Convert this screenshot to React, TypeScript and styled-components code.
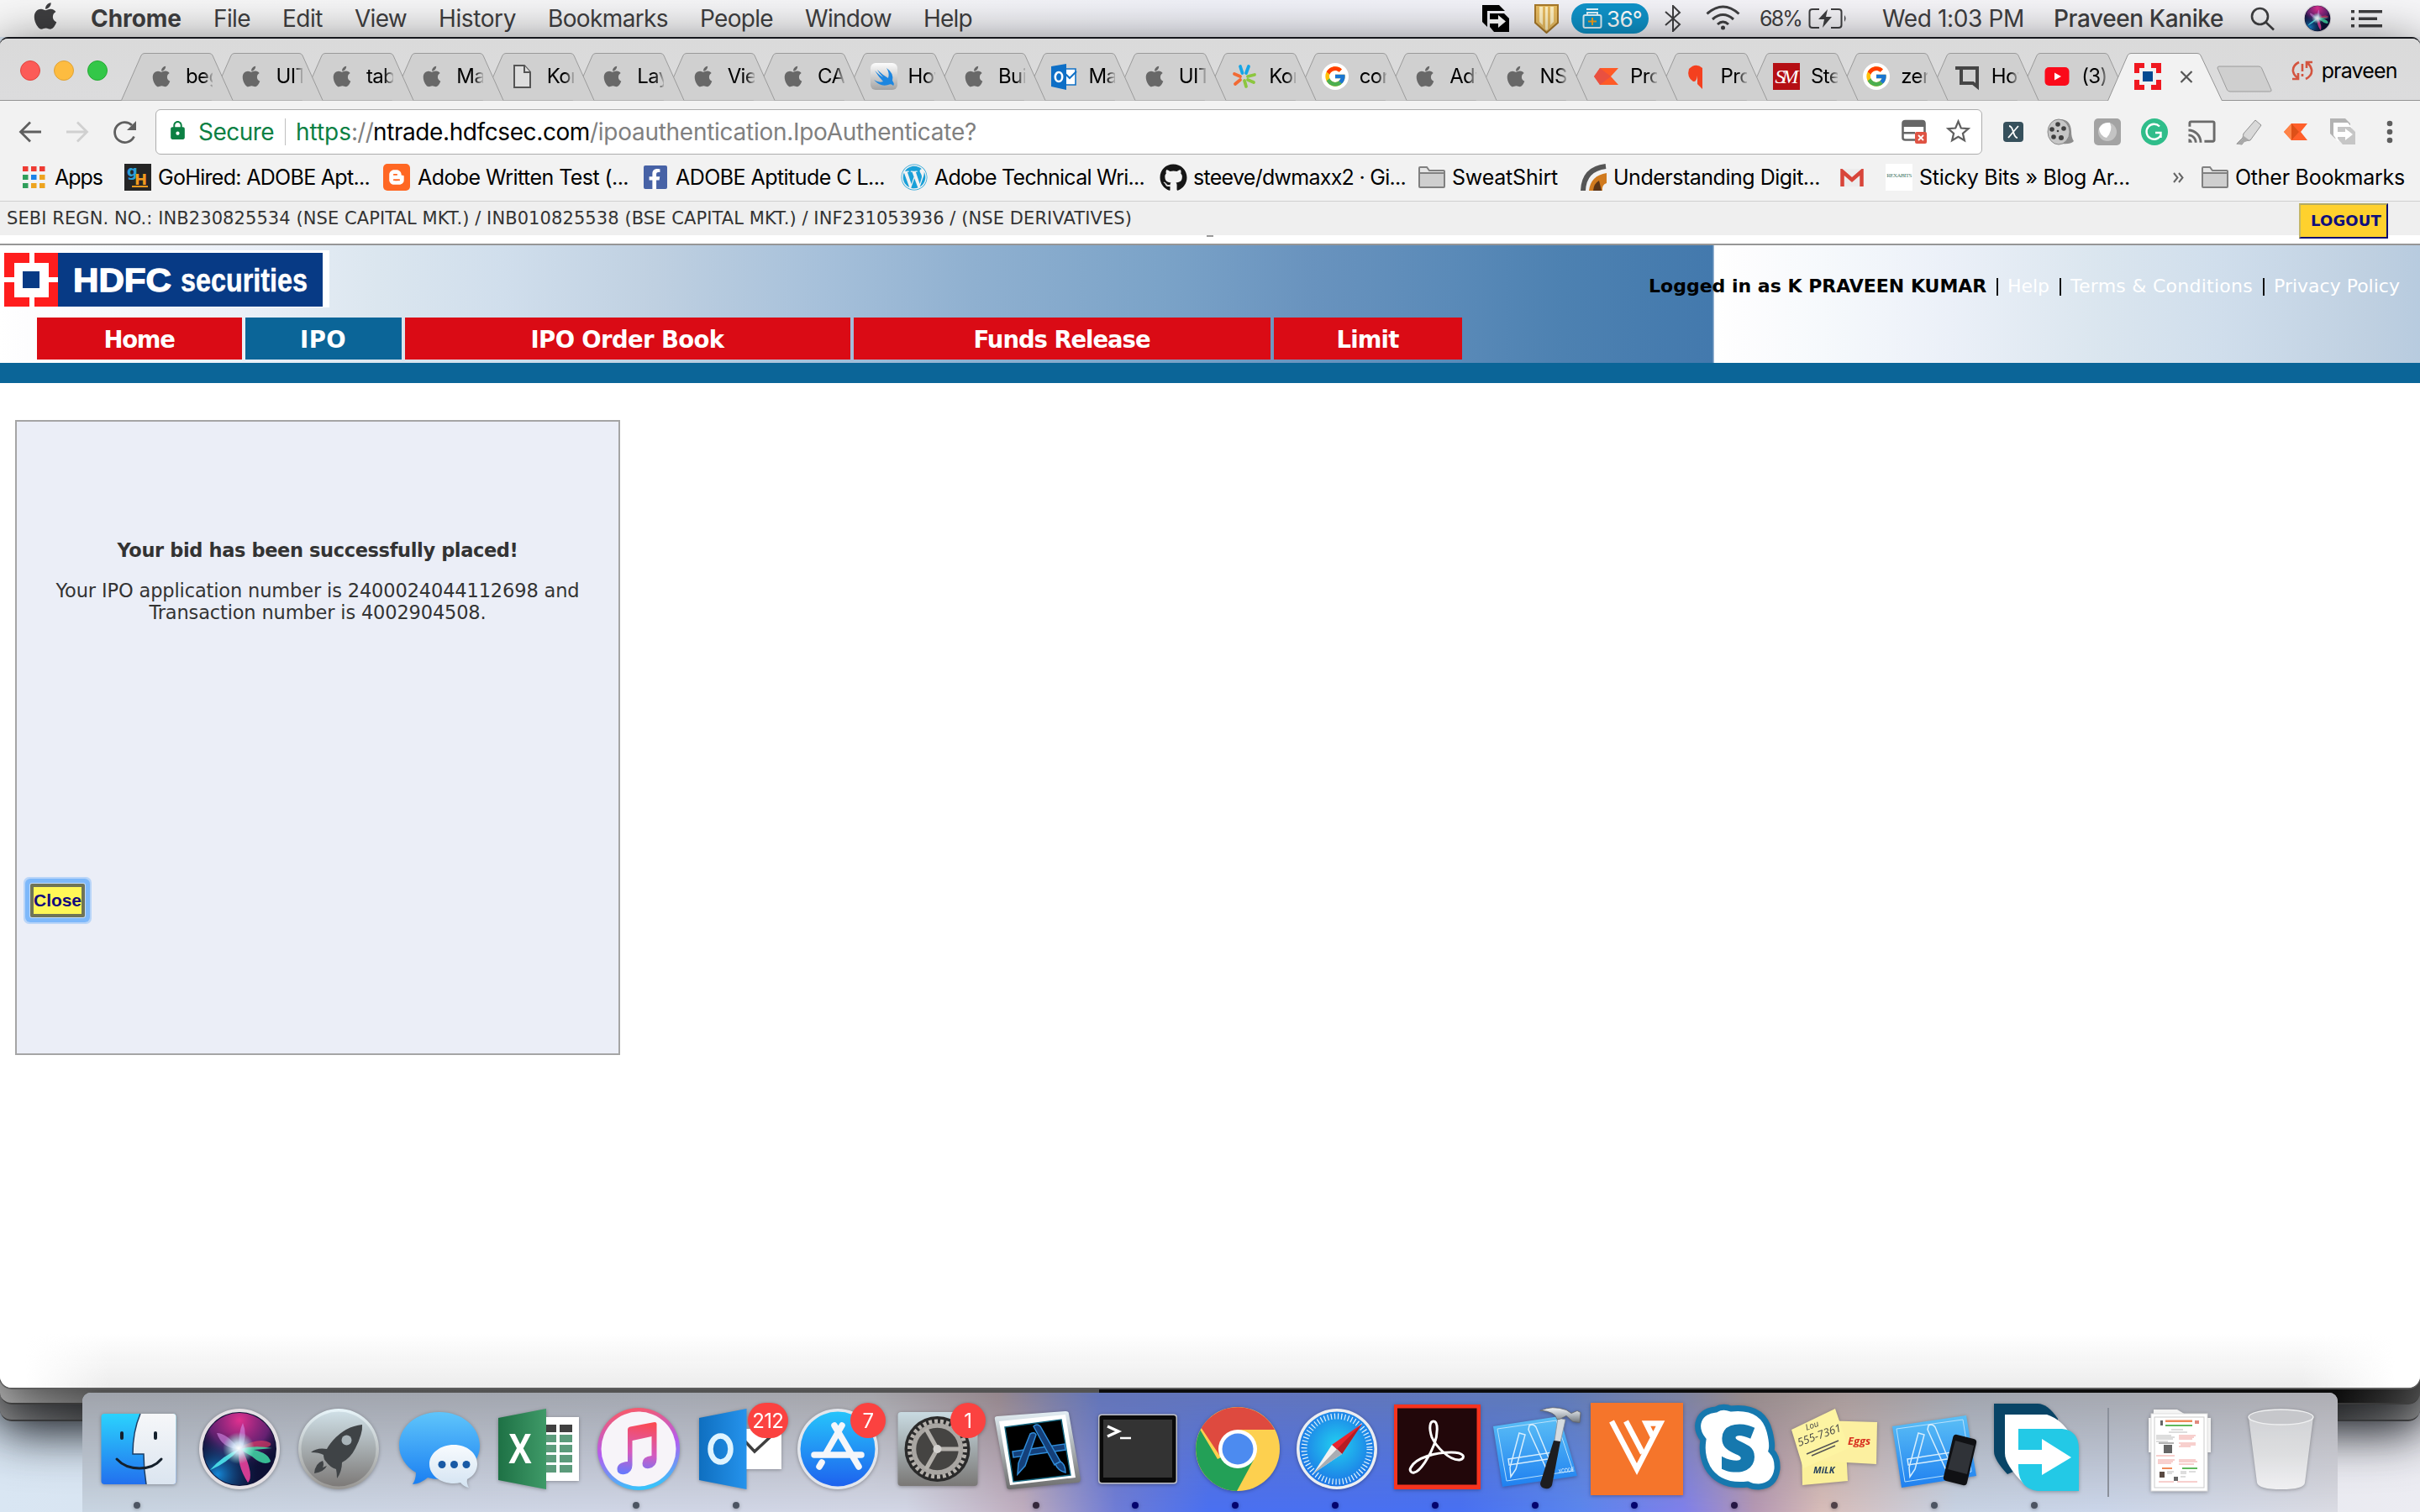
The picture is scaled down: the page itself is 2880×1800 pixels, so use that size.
import React, { useLayoutEffect, useRef, useState } from "react";
import styled, { createGlobalStyle } from "styled-components";
import {
  FaApple,
  FaGithub,
  FaWordpress,
  FaFacebookF,
  FaBloggerB,
} from "react-icons/fa";
import { FcGoogle } from "react-icons/fc";
import { MdCast, MdLock } from "react-icons/md";

const UI = `Inter, "Liberation Sans", sans-serif`;
const VERDANA = `"DejaVu Sans", "Liberation Sans", sans-serif`;

const GlobalStyle = createGlobalStyle`
  html, body { margin: 0; padding: 0; overflow: hidden; }
  * { box-sizing: border-box; }
  svg { display: block; flex: none; }
`;

/* ---------- text fitted to a column width through its tracking ---------- */

const FitBox = styled.span<{ $w: number; $ml?: number }>`
  display: block;
  flex: none;
  width: ${(p) => p.$w}px;
  margin-left: ${(p) => p.$ml || 0}px;
  white-space: pre;
`;
const FitInner = styled.span`
  display: inline-block;
  white-space: pre;
`;

function Fit({ w, ml, text, className }: { w: number; ml?: number; text: string; className?: string }) {
  const ref = useRef<HTMLSpanElement>(null);
  const [tracking, setTracking] = useState(0);
  useLayoutEffect(() => {
    const el = ref.current;
    if (!el) return;
    const natural = el.getBoundingClientRect().width - tracking * text.length;
    const next = (w - natural) / text.length;
    if (Math.abs(next - tracking) > 0.01) setTracking(next);
  }, [w, text]);
  return (
    <FitBox $w={w} $ml={ml} className={className}>
      <FitInner ref={ref} style={{ letterSpacing: tracking }}>
        {text}
      </FitInner>
    </FitBox>
  );
}

/* ---------- screen ---------- */

const Screen = styled.div`
  position: relative;
  width: 2880px;
  height: 1800px;
  overflow: hidden;
  display: flex;
  flex-direction: column;
  font-family: ${UI};
  background: linear-gradient(90deg, #d9e6f3 0, #cfd6e2 50%, #ececf2 100%);
`;

const MenuBar = styled.div`
  height: 44px;
  flex: none;
  display: flex;
  align-items: center;
  background: linear-gradient(90deg, #f7f7f7 0, #f5f5f7 35%, #f0f1f8 50%, #f5f4f8 75%, #f6f6f8 100%);
  color: #3f3f41;
  font-size: 28px;
  line-height: 44px;
  padding-left: 36px;
  padding-right: 45px;
`;
const MenuTitle = styled(Fit)<{ $bold?: boolean }>`
  font-weight: ${(p) => (p.$bold ? 700 : 400)};
`;
const UserName = styled(Fit)`
  font-weight: 500;
`;
const Spacer = styled.div`
  flex: 1;
`;
const Shift = styled.div<{ $ml: number; $dy?: number; $w?: number }>`
  flex: none;
  margin-left: ${(p) => p.$ml}px;
  width: ${(p) => (p.$w ? p.$w + "px" : "auto")};
  transform: translateY(${(p) => p.$dy || 0}px);
`;
const FanPill = styled.div`
  margin-left: 15px;
  width: 92px;
  height: 36px;
  border-radius: 18px;
  background: #0f93c9;
  color: #fff;
  font-size: 26px;
  line-height: 37px;
  display: flex;
  align-items: center;
  padding-left: 13px;
`;
const Charge = styled(Fit)`
  font-size: 25px;
`;

const MENUS: [string, number][] = [
  ["File", 44],
  ["Edit", 48],
  ["View", 62],
  ["History", 92],
  ["Bookmarks", 143],
  ["People", 87],
  ["Window", 103],
  ["Help", 58],
];

/* ---------- browser window ---------- */

const Browser = styled.div`
  position: relative;
  height: 1608px;
  flex: none;
  display: flex;
  flex-direction: column;
  background: #fff;
  border-top: 2px solid #15171c;
  border-radius: 10px 10px 14px 14px;
  overflow: hidden;
  box-shadow: 0 1px 0 1px #5c5c5c, 0 10px 60px rgba(0, 0, 0, 0.6);
  z-index: 2;
`;
const TabStrip = styled.div`
  height: 74px;
  flex: none;
  display: flex;
  align-items: flex-end;
  background: linear-gradient(#dadada, #dcdcdd);
  border-bottom: 1px solid #949494;
`;
const Lights = styled.div`
  width: 144px;
  height: 73px;
  display: flex;
  gap: 16px;
  padding: 26px 0 0 24px;
`;
const Light = styled.i<{ $c: string; $b: string }>`
  width: 24px;
  height: 24px;
  border-radius: 50%;
  background: ${(p) => p.$c};
  border: 1px solid ${(p) => p.$b};
`;
const Tab = styled.div<{ $z: number; $active?: boolean }>`
  position: relative;
  z-index: ${(p) => p.$z};
  flex: none;
  width: ${(p) => (p.$active ? 130 : 107.45)}px;
  height: 56px;
  display: flex;
  align-items: center;
`;
const TabShape = styled.svg`
  position: absolute;
  left: 0;
  top: 0;
`;
const TabIcon = styled.div`
  position: relative;
  width: 34px;
  height: 34px;
  margin-left: 31px;
  flex: none;
  display: flex;
  align-items: center;
  justify-content: center;
`;
const TabLabel = styled.div`
  position: relative;
  margin-left: 12px;
  width: 32px;
  flex: none;
  overflow: hidden;
  white-space: nowrap;
  font-size: 24px;
  letter-spacing: -0.6px;
  line-height: 58px;
  color: #000;
  mask-image: linear-gradient(90deg, #000 65%, rgba(0, 0, 0, 0.15) 100%);
`;
const CloseMark = styled.svg`
  position: relative;
  margin-left: 21px;
`;
const Profile = styled.div`
  display: flex;
  align-items: center;
  height: 73px;
  padding-top: 2px;
  margin-left: 23px;
  font-size: 25px;
`;

const TABS: [string, string][] = [
  ["apple", "beg"],
  ["apple", "UIT"],
  ["apple", "tabl"],
  ["apple", "Ma"],
  ["file", "Kon"],
  ["apple", "Lay"],
  ["apple", "Vie"],
  ["apple", "CA"],
  ["swift", "How"],
  ["apple", "Buil"],
  ["outlook", "Ma"],
  ["apple", "UIT"],
  ["kony", "Kon"],
  ["google", "con"],
  ["apple", "Adv"],
  ["apple", "NS"],
  ["kite", "Pro"],
  ["q", "Pro"],
  ["sm", "Ste"],
  ["google", "zer"],
  ["tl", "How"],
  ["youtube", "(3)"],
];

const GoogleDisc = styled.div`
  width: 32px;
  height: 32px;
  border-radius: 50%;
  background: #fff;
  display: flex;
  align-items: center;
  justify-content: center;
`;
const SwiftBox = styled.div`
  width: 32px;
  height: 32px;
  border-radius: 6px;
  background: linear-gradient(#fdfdfd, #a3a3a3);
  display: flex;
  align-items: center;
  justify-content: center;
`;
const SmBox = styled.div`
  width: 32px;
  height: 32px;
  background: #b50f14;
  color: #fff;
  font: italic 24px/32px "Liberation Serif", serif;
  letter-spacing: -4px;
  padding-right: 3px;
  text-align: center;
`;

function Favicon({ kind }: { kind: string }) {
  switch (kind) {
    case "apple":
      return <FaApple size={28} color="#686868" />;
    case "file":
      return (
        <svg width="34" height="34" viewBox="0 0 34 34" fill="#dedede" stroke="#555" strokeWidth="2">
          <path d="M7 4h12l7 8v18H7z" />
          <path d="M19 4v8h7" />
        </svg>
      );
    case "swift":
      return (
        <SwiftBox>
          <svg width="28" height="28" viewBox="0 0 28 28">
            <path
              d="M3 7q6 6 10 8Q8 10 6 6q6 6 13 10Q21 10 17 4q9 6 7 15 3 4 1 6-2-3-6-1-9 3-17-6 6 4 11 2Q8 15 3 7z"
              fill="#1c86e0"
            />
          </svg>
        </SwiftBox>
      );
    case "outlook":
      return (
        <svg width="34" height="34" viewBox="0 0 34 34">
          <path d="M19 8h12v19H19z" fill="#fff" stroke="#1070c5" strokeWidth="1.6" />
          <path d="M19 14l5 5 8-8" fill="none" stroke="#1070c5" strokeWidth="2" />
          <path d="M2 5l18-3v31L2 29z" fill="#0e6fc6" />
          <ellipse cx="11" cy="17.500" rx="4.200" ry="5.500" fill="none" stroke="#fff" strokeWidth="2.600" />
        </svg>
      );
    case "kony":
      return (
        <svg width="34" height="34" viewBox="0 0 34 34" fill="none" strokeWidth="3.800" strokeLinecap="round">
          <path d="M14.500 13L12 5M19 13l3-8" stroke="#15a5e6" />
          <path d="M12 17l-7-3M12 21l-6 5" stroke="#f26a33" />
          <path d="M21 17l8-2M21 21l7 3M17 22l2 7" stroke="#8cc63f" />
        </svg>
      );
    case "google":
      return (
        <GoogleDisc>
          <FcGoogle size={28} />
        </GoogleDisc>
      );
    case "kite":
      return (
        <svg width="34" height="34" viewBox="0 0 34 34">
          <path d="M10 7h22l-9 10 9 10H10L3 17z" fill="#ff5a26" />
          <path d="M10 7l13 10-13 10L3 17z" fill="#e04b4b" opacity=".7" />
        </svg>
      );
    case "q":
      return (
        <svg width="34" height="34" viewBox="0 0 34 34" fill="#f4401f">
          <path d="M9 8q8-8 16-1v25l-6-6V16q-1 8-5 7Q6 18 9 8z" />
        </svg>
      );
    case "sm":
      return <SmBox>SM</SmBox>;
    case "tl":
      return (
        <svg width="34" height="34" viewBox="0 0 34 34" fill="none" stroke="#454545" strokeWidth="4">
          <path d="M3 7h26v22l-5-4H10V7" />
        </svg>
      );
    case "youtube":
      return (
        <svg width="30" height="24" viewBox="0 0 30 24">
          <rect x="0.500" y="1" width="29" height="22" rx="5" fill="#fb0a1a" />
          <path d="M12 7.500l8 4.500-8 4.500z" fill="#fff" />
        </svg>
      );
    case "hdfc":
      return (
        <svg width="32" height="32" viewBox="0 0 32 32">
          <path
            d="M0 0h12v6H6v6H0zM20 0h12v12h-6V6h-6zM0 20h6v6h6v6H0zM26 20h6v12H20v-6h6z"
            fill="#f01820"
          />
          <rect x="10" y="10" width="12" height="12" fill="#054a91" />
        </svg>
      );
    default:
      return null;
  }
}

const Toolbar = styled.div`
  height: 73px;
  flex: none;
  display: flex;
  align-items: center;
  background: #f2f2f2;
`;
const NavButtons = styled.svg`
  margin-right: 15px;
`;
const Omnibox = styled.div`
  width: 2174px;
  height: 54px;
  flex: none;
  display: flex;
  align-items: center;
  background: #fff;
  border: 1px solid #adadad;
  border-radius: 6px;
  font-size: 28px;
  line-height: 52px;
`;
const Green = styled(Fit)`
  color: #0b8043;
`;
const Ink = styled(Fit)`
  color: #000;
`;
const Grey = styled(Fit)`
  color: #808080;
`;
const Divider = styled.i`
  width: 1px;
  height: 32px;
  margin: 0 12px 0 13px;
  background: #c0c0c0;
`;
const Extensions = styled.div`
  display: flex;
  padding-left: 9px;
`;
const Ext = styled.div`
  width: 56px;
  height: 40px;
  display: flex;
  align-items: center;
  justify-content: center;
`;
const Bookmarks = styled.div`
  height: 47px;
  flex: none;
  display: flex;
  align-items: center;
  background: #f2f2f2;
  border-bottom: 1px solid #cfcfcf;
  font-size: 25px;
  line-height: 38px;
  color: #000;
  padding-bottom: 10px;
`;
const FbBox = styled.div`
  width: 28px;
  height: 28px;
  background: #4762a6;
  color: #fff;
  border-radius: 2px;
  display: flex;
  align-items: flex-end;
  justify-content: flex-end;
  padding-right: 3px;
`;
const BloggerBox = styled.div`
  width: 32px;
  height: 32px;
  border-radius: 5px;
  background: #ff6723;
  color: #fff;
  display: flex;
  align-items: center;
  justify-content: center;
`;
const Rex = styled.div`
  width: 32px;
  height: 32px;
  background: #fff;
  color: #4a7a6a;
  font: 7px/28px "Liberation Serif", serif;
  letter-spacing: -0.6px;
  text-align: center;
  overflow: hidden;
`;

function Folder() {
  return (
    <svg width="32" height="26" viewBox="0 0 32 26">
      <path d="M1 24V2q0-1 1-1h8l3 4h17q1 0 1 1v18q0 1-1 1H2q-1 0-1-1z" fill="#e6e6e6" stroke="#808080" strokeWidth="2" />
      <path d="M2 9h28v15H2z" fill="#cfcfcf" />
      <path d="M1 8h30" stroke="#808080" strokeWidth="2" />
    </svg>
  );
}

function AppsGrid() {
  const c = ["#ee3b33", "#ee3b33", "#ee3b33", "#2f9e5b", "#1a82e8", "#eda41f", "#2f9e5b", "#eda41f", "#eda41f"];
  return (
    <svg width="27" height="27" viewBox="0 0 27 27">
      {c.map((f, i) => (
        <rect key={i} x={(i % 3) * 10} y={Math.floor(i / 3) * 10} width="6.500" height="6" fill={f} />
      ))}
    </svg>
  );
}

/* ---------- web page ---------- */

const Page = styled.div`
  flex: 1;
  position: relative;
  display: flex;
  flex-direction: column;
  font-family: ${VERDANA};
  background: #fff;
`;
const Registration = styled.div`
  height: 40px;
  flex: none;
  display: flex;
  justify-content: space-between;
  background: #efefef;
  color: #333;
  font-size: 21px;
  line-height: 41px;
  padding: 0 38px 0 8px;
`;
const Logout = styled.button`
  height: 42px;
  width: 106px;
  margin-top: 2px;
  border: 2px solid #0c0c73;
  border-top: 2px solid #b3ab63;
  border-left-color: #c5b765;
  background: #ffd12d;
  color: #0f0f7d;
  font: bold 18px/38px ${VERDANA};
  padding: 0 0 0 12px;
  text-align: left;
`;
const Gap = styled.div`
  height: 12px;
  flex: none;
  border-bottom: 2px solid #969696;
  display: flex;
  justify-content: center;
`;
const Dash = styled.i`
  width: 8px;
  height: 2px;
  background: #999;
`;
const Banner = styled.div`
  height: 140px;
  flex: none;
  display: flex;
  justify-content: space-between;
  background: linear-gradient(
      90deg,
      #fff 0,
      #fdfdfe 30px,
      #f6f9fc 130px,
      #ebf0f8 280px,
      #dbe6ef 450px,
      #d0deec 600px,
      #bfd0e1 780px,
      #a6c0da 980px,
      #8fb0d0 1160px,
      #7ba3c8 1380px,
      #6993be 1560px,
      #5a8ab8 1730px,
      #4d81b1 1860px,
      #4379ad 2038px,
      #b9cbdf 2040px
    )
    0 0 / 2040px 100% repeat-x;
`;
const BannerLeft = styled.div`
  display: flex;
  flex-direction: column;
  padding-top: 6px;
`;
const Nav = styled.div`
  display: flex;
  gap: 4px;
  margin: 12px 0 0 44px;
`;
const NavItem = styled.div<{ $w: number; $on?: boolean }>`
  width: ${(p) => p.$w}px;
  height: 50px;
  background: ${(p) => (p.$on ? "#0b6598" : "#da0b15")};
  color: #fff;
  font-size: 27.5px;
  font-weight: 700;
  line-height: 53px;
  display: flex;
  justify-content: center;
  padding-right: 1px;
`;
const Account = styled.div`
  display: flex;
  height: 96px;
  line-height: 98px;
  font-size: 22px;
  color: #000;
  padding-right: 24px;
`;
const AccountName = styled(Fit)`
  font-weight: 700;
`;
const AccountLink = styled(Fit)`
  color: #fff;
`;
const Bar = styled.i`
  width: 2px;
  height: 21px;
  background: #111;
  margin: 39px 11.5px 0;
`;
const BlueRule = styled.div`
  height: 24px;
  flex: none;
  background: #0b6598;
`;
const Card = styled.div`
  width: 720px;
  height: 756px;
  margin: 44px 0 0 18px;
  border: 2px solid #a5a5a5;
  background: #ebeef7;
  color: #333;
  font-size: 22.5px;
  line-height: 26px;
  padding: 140px 0 0;
  display: flex;
  flex-direction: column;
  align-items: center;
`;
const CardTitle = styled.div`
  font-weight: 700;
  margin-bottom: 22px;
`;
const CloseButton = styled.button`
  align-self: flex-start;
  width: 65px;
  height: 40px;
  margin: 310px 0 0 16px;
  border: 4px solid #6f7458;
  background: #fff757;
  color: #120a7d;
  font: bold 21px/32px "Liberation Sans", Arial, sans-serif;
  padding: 0;
  white-space: nowrap;
  box-shadow: 0 0 0 1px #c4dbf8, 0 0 0 6px #7db8fa, 0 0 0 8px #b9d5f8;
  border-radius: 2px;
`;
const PageFade = styled.div`
  position: absolute;
  left: 0;
  right: 0;
  bottom: 0;
  height: 64px;
  background: linear-gradient(rgba(236, 236, 236, 0), #ececec);
  mask-image: linear-gradient(90deg, transparent 30px, #000 130px, #000 2740px, transparent 2850px);
`;

function Logo() {
  return (
    <svg width="392" height="68" viewBox="0 0 392 68">
      <rect width="392" height="68" fill="#fff" />
      <rect x="5" y="3" width="64" height="64" fill="#ff1d1d" />
      <path d="M35 3h6v65h-6zM5 32h64v6H5z" fill="#fff" />
      <rect x="17" y="15" width="41" height="41" fill="#fff" />
      <rect x="27" y="25" width="20" height="20" fill="#073a85" />
      <rect x="69" y="3" width="315" height="64" fill="#073a85" />
      <text x="87" y="48.500" fill="#fff" stroke="#fff" strokeWidth="1.300" fontSize="39" fontWeight="700" fontFamily="Liberation Sans, Arial, sans-serif" textLength="117" lengthAdjust="spacingAndGlyphs">
        HDFC
      </text>
      <text x="215" y="48.500" fill="#fff" stroke="#fff" strokeWidth="0.500" fontSize="39" fontWeight="700" fontFamily="Liberation Sans, Arial, sans-serif" textLength="151" lengthAdjust="spacingAndGlyphs">
        securities
      </text>
    </svg>
  );
}

/* ---------- windows behind ---------- */

const BackWindow = styled.div<{ $bottom: number; $bg: string }>`
  position: absolute;
  left: 0;
  right: 0;
  top: 1500px;
  height: ${(p) => p.$bottom - 1500}px;
  border-radius: 0 0 14px 14px;
  background: ${(p) => p.$bg};
  border-bottom: 2px solid #4a4a4a;
  box-shadow: 0 14px 60px rgba(30, 34, 40, 0.75);
`;

/* ---------- dock ---------- */

const Dock = styled.div`
  position: absolute;
  z-index: 3;
  left: 98px;
  top: 1658px;
  width: 2684px;
  height: 142px;
  border-radius: 10px 10px 0 0;
  overflow: hidden;
  display: flex;
  align-items: flex-start;
  padding-left: 8.5px;
  background: linear-gradient(
    90deg,
    #c9d5e2 0,
    #d0d6e6 600px,
    #d3d7e6 980px,
    #c0aebf 1120px,
    #6f7cd6 1230px,
    #4a70f2 1340px,
    #4870f3 1640px,
    #5a86ef 1780px,
    #7f80ec 1905px,
    #b598b4 1990px,
    #d8bdb9 2070px,
    #c8d3e4 2230px,
    #cbd6ea 2400px,
    #dbdce4 2684px
  );
  &::before {
    content: "";
    position: absolute;
    inset: 0;
    background: linear-gradient(90deg, #9fa3ab 0, #a3a7b0 700px, #a5a5aa 940px, #94868c 1090px, #6375b8 1210px, #6275bd 1400px, #5f7ab8 1750px, #7c829f 1900px, #958a8a 1980px, #a79a9a 2100px, #a0a4ad 2250px, #adadb3 2684px);
    mask-image: linear-gradient(#000, rgba(0, 0, 0, 0.6) 40%, transparent 100%);
  }
`;
const DockCell = styled.div<{ $w?: number; $ml?: number }>`
  position: relative;
  width: ${(p) => p.$w || 118.8}px;
  margin-left: ${(p) => p.$ml || 0}px;
  flex: none;
  padding-top: 12px;
  display: flex;
  flex-direction: column;
  align-items: center;
  filter: drop-shadow(0 1px 2px rgba(0, 0, 0, 0.3));
`;
const Dot = styled.i<{ $c: string }>`
  width: 8px;
  height: 8px;
  margin-top: 8px;
  margin-right: 5px;
  border-radius: 50%;
  background: ${(p) => p.$c};
`;
const Badge = styled.div<{ $l: number; $w: number }>`
  position: absolute;
  left: ${(p) => p.$l}px;
  top: 12px;
  width: ${(p) => p.$w}px;
  height: 42px;
  border-radius: 24px;
  background: #fb4240;
  color: #fff;
  font-size: 24px;
  line-height: 43px;
  text-align: center;
  letter-spacing: -0.6px;
`;
const DockRule = styled.i`
  position: relative;
  width: 1.5px;
  height: 106px;
  margin: 18px 0 0 26px;
  background: #8b909b;
`;

type IconProps = { children?: React.ReactNode };
const Art = ({ children }: IconProps) => (
  <svg width="110" height="110" viewBox="0 0 110 110" overflow="visible">
    {children}
  </svg>
);

const grad = (id: string, stops: [string, string][], horizontal = false) => (
  <linearGradient id={id} x1="0" y1="0" x2={horizontal ? "1" : "0"} y2={horizontal ? "0" : "1"}>
    {stops.map(([o, c]) => (
      <stop key={o} offset={o} stopColor={c} />
    ))}
  </linearGradient>
);

const Finder = () => (
  <Art>
    <defs>
      {grad("fa", [["0", "#2bd3fd"], ["1", "#2270ee"]])}
      {grad("fb", [["0", "#f6f7f9"], ["1", "#dbe5f0"]])}
    </defs>
    <rect x="9.500" y="13" width="89" height="84" rx="4" fill="url(#fa)" />
    <path d="M56 13h39q3.500 0 3.500 4v76q0 4-3.500 4H63q-3-18-3-36H47Q47 34 56 13z" fill="url(#fb)" />
    <path d="M56 13Q47 34 47 61h13q0 18 3 36" fill="none" stroke="#1c3f66" strokeWidth="1.500" />
    <path d="M34 36v6M74 36v6" stroke="#14202c" strokeWidth="4" strokeLinecap="round" />
    <path d="M28 67q10 11 27 11t26-11" fill="none" stroke="#14202c" strokeWidth="3" strokeLinecap="round" />
  </Art>
);

const SiriArt = () => (
  <>
    <defs>
      <radialGradient id="s1" cx=".5" cy=".1" r=".7">
        <stop offset="0" stopColor="#e0308f" />
        <stop offset=".6" stopColor="#7a2580" stopOpacity=".8" />
        <stop offset="1" stopColor="#101339" stopOpacity="0" />
      </radialGradient>
      <radialGradient id="s2" cx=".2" cy=".85" r=".6">
        <stop offset="0" stopColor="#1587d6" />
        <stop offset="1" stopColor="#101339" stopOpacity="0" />
      </radialGradient>
      <radialGradient id="s3" cx=".5" cy=".5" r=".5">
        <stop offset="0" stopColor="#fff" />
        <stop offset=".35" stopColor="#d8f6ff" stopOpacity=".85" />
        <stop offset="1" stopColor="#8fd" stopOpacity="0" />
      </radialGradient>
    </defs>
    <circle cx="55" cy="55" r="48" fill="#e4e0e4" />
    <circle cx="55" cy="55" r="44" fill="#0d1035" />
    <circle cx="55" cy="55" r="43" fill="url(#s1)" />
    <circle cx="55" cy="55" r="43" fill="url(#s2)" />
    <path d="M55 53Q80 40 92 48q4 8-37 7z" fill="#d33b62" opacity=".7" />
    <path d="M55 55Q72 50 94 54l-22 2q18 4 20 14-8 6-22-6z" fill="#3fd9a4" opacity=".85" />
    <path d="M55 55Q36 62 20 80q20-8 35-25z" fill="#4fe6ec" opacity=".9" />
    <path d="M55 55q-4 18 10 40 8-8-6-38z" fill="#e8409a" opacity=".9" />
    <path d="M54 55Q40 36 28 36q6 18 26 19zM55 54q-2-18 4-30 6 14-1 30z" fill="#d58be8" opacity=".6" />
    <circle cx="54" cy="54" r="19" fill="url(#s3)" />
  </>
);

const Launchpad = () => (
  <Art>
    <defs>
      {grad("la", [["0", "#cfdfe6"], ["1", "#7d7a78"]])}
      {grad("lb", [["0", "#e8f5fa"], ["1", "#989693"]])}
    </defs>
    <circle cx="55" cy="55" r="48" fill="url(#lb)" />
    <circle cx="55" cy="55" r="44.500" fill="url(#la)" />
    <path d="M83 26Q63 28 48 45q-5 6-7 10-12-2-19 4 10 0 15 3 0 5 3 8 5 7 12 9 1 5 1 11 6-8 6-19 10-5 16-17 9-18 8-28z" fill="#3f4346" />
    <circle cx="64.500" cy="44.500" r="6" fill="#a9b4b9" />
    <path d="M36 69q-9 3-10 15 12-2 15-9l-5 2q2-4 0-8z" fill="#3f4346" />
  </Art>
);

const Messages = () => (
  <Art>
    <defs>
      {grad("ma", [["0", "#5fc5fb"], ["1", "#1a7ff2"]])}
      {grad("mb", [["0", "#f8fbfe"], ["1", "#d3e3f2"]])}
    </defs>
    <path d="M56 11C29 11 8 28 8 51c0 13 8 25 20 32q0 8-4 14 10-1 18-8 7 2 14 2c27 0 48-18 48-40S83 11 56 11z" fill="url(#ma)" />
    <path d="M73 50c-16 0-29 10-29 23s13 23 29 23q4 0 8-1 4 5 10 6-3-5-2-10c8-4 12-11 12-18 0-13-12-23-28-23z" fill="url(#mb)" />
    <circle cx="59" cy="73.500" r="4.500" fill="#1859a5" />
    <circle cx="73.500" cy="73.500" r="4.500" fill="#1859a5" />
    <circle cx="88" cy="73.500" r="4.500" fill="#1859a5" />
  </Art>
);

const Excel = () => (
  <Art>
    <defs>{grad("xa", [["0", "#1e7145"], ["1", "#3f9a68"]], true)}</defs>
    <rect x="60" y="17" width="43" height="76" fill="#fff" />
    <path d="M64 26h12v9H64zM80 26h15v9H80z" fill="#404040" />
    {[38, 50, 62, 74].map((y) => (
      <path key={y} d={`M64 ${y}h12v9H64zM80 ${y}h15v9H80z`} fill="#5b9b7b" />
    ))}
    <path d="M7 18L64 7v96L7 92z" fill="url(#xa)" />
    <text x="33" y="72" textAnchor="middle" fontSize="49" fontWeight="700" fill="#fff" fontFamily="Open Sans, sans-serif" textLength="27" lengthAdjust="spacingAndGlyphs">
      X
    </text>
  </Art>
);

const ITunes = () => (
  <Art>
    <defs>
      <linearGradient id="ia" x1=".3" y1="0" x2=".5" y2="1">
        <stop offset="0" stopColor="#fb5a63" />
        <stop offset=".5" stopColor="#b45bf0" />
        <stop offset="1" stopColor="#35c5fb" />
      </linearGradient>
      <linearGradient id="ib" x1=".6" y1="0" x2=".5" y2="1">
        <stop offset="0" stopColor="#fb4a52" />
        <stop offset=".6" stopColor="#d45bc0" />
        <stop offset="1" stopColor="#6a78fb" />
      </linearGradient>
    </defs>
    <circle cx="55" cy="55" r="49" fill="url(#ia)" />
    <circle cx="55" cy="55" r="44.500" fill="#f7f4f9" />
    <path d="M42 32q0-3 3-3.500L74 23q2.500 0 2.500 2v42q0 9-9 11-8 1-8-6 0-8 11-9V40l-23 5v29q0 9-9 11-9 1-9-6 0-8 12.500-9z" fill="url(#ib)" />
  </Art>
);

const Outlook = () => (
  <Art>
    <defs>{grad("oa", [["0", "#0f6fc0"], ["1", "#2593ec"]], true)}</defs>
    <rect x="60" y="31" width="46" height="48" fill="#fff" />
    <path d="M60 43l14 15 29-27" fill="none" stroke="#3f3f3f" strokeWidth="3.500" />
    <path d="M8 18L64.500 7v96L8 92z" fill="url(#oa)" />
    <ellipse cx="33.500" cy="55" rx="12" ry="15.500" fill="none" stroke="#dff4ff" strokeWidth="6.500" />
  </Art>
);

const AppStore = () => (
  <Art>
    <defs>{grad("aa", [["0", "#26c4fb"], ["1", "#1e62ee"]])}</defs>
    <circle cx="55" cy="55" r="48" fill="#e3e6ec" />
    <circle cx="55" cy="55" r="44.500" fill="url(#aa)" />
    <g stroke="#f4f6fa" strokeWidth="7.500" strokeLinecap="round">
      <path d="M27 62h56M60 27L41 60M36 71l-3 5M51 27l29 49" />
    </g>
  </Art>
);

const Prefs = () => (
  <Art>
    <defs>{grad("pa", [["0", "#c9dbe2"], ["1", "#7a7876"]])}</defs>
    <rect x="7.500" y="11" width="95" height="88" rx="4" fill="url(#pa)" />
    <circle cx="54.500" cy="55" r="39" fill="#2a2a2a" />
    <circle cx="54.500" cy="55" r="33" fill="none" stroke="#b5b1ac" strokeWidth="5" strokeDasharray="4 2.900" />
    <circle cx="54.500" cy="55" r="28" fill="#454442" stroke="#a9a6a2" strokeWidth="5.500" />
    <path d="M54.500 55h27M54.500 55L41 31M54.500 55L41 79" stroke="#b3b0ab" strokeWidth="5" />
    <circle cx="54.500" cy="55" r="5" fill="#d4d2cf" />
  </Art>
);

const blueprint = (stroke: string) => (
  <g fill="none" stroke={stroke} strokeWidth="1.500">
    <path d="M25 62l52-8 1 7-52 8zM38 31l7 2-11 41-6 9-1-11zM50 22q5-3 8 2l19 46-7 3-21-46z" />
  </g>
);

const Instruments = () => (
  <Art>
    <defs>{grad("na", [["0", "#e3eef4"], ["1", "#6d6d6d"]])}</defs>
    <path d="M4 20q-1-4 3-4l81-6q4 0 4 3l14 78q0 4-4 4l-80 8q-4 0-4-3z" fill="url(#na)" />
    <path d="M9 22l79-8 12 75-78 9z" fill="#fff" />
    <path d="M16 29l67-9 11 66-68 8z" fill="#000" stroke="#12657f" strokeWidth="1.500" />
    <g fill="#14407a" stroke="#2f8bd8" strokeWidth="1.500">
      <path d="M25 58l62-9 1 7-62 9z" />
      <path d="M46 37q5-3 7 1L40 75l-9 10 1-13z" />
      <path d="M50 28q4-4 8 0l24 42-7 4z" />
      <path d="M76 73l6-3q6 3 6 13-9-2-12-10z" />
    </g>
  </Art>
);

const Terminal = () => (
  <Art>
    <rect x="8" y="13.500" width="94" height="83" rx="4" fill="#bfc0c6" />
    <rect x="9.500" y="15" width="91" height="80" rx="3" fill="#0a0a0a" />
    <rect x="14" y="20" width="82" height="69" fill="#333" />
    <path d="M19 28l13 6-13 6" fill="none" stroke="#fff" strokeWidth="3.500" />
    <path d="M34 42h13" stroke="#fff" strokeWidth="2.500" />
  </Art>
);

const ChromeArt = () => (
  <Art>
    <circle cx="55" cy="55" r="50" fill="#fdd04f" />
    <path d="M55 55L31 67 10.500 32.500A50 50 0 0 0 54 105l20-37z" fill="#23a057" />
    <path d="M11.700 30A50 50 0 0 1 99 32H55L33 62z" fill="#de4a3f" />
    <circle cx="55" cy="55" r="23" fill="#fff" />
    <circle cx="55" cy="55" r="18.500" fill="#4c8bf0" />
  </Art>
);

const Safari = () => (
  <Art>
    <defs>
      <radialGradient id="sa" cx=".5" cy=".45" r=".55">
        <stop offset="0" stopColor="#22d0f0" />
        <stop offset="1" stopColor="#1c74e6" />
      </radialGradient>
    </defs>
    <circle cx="55" cy="55" r="48" fill="#eceef1" />
    <circle cx="55" cy="55" r="44.500" fill="url(#sa)" />
    <circle cx="55" cy="55" r="39" fill="none" stroke="#e4f3fb" strokeWidth="7" strokeDasharray="1.200 2.900" />
    <path d="M85 25L49 50l12 11z" fill="#e8242e" />
    <path d="M85 25L55 55l6 6z" fill="#b51c24" />
    <path d="M27 84l22-34 12 11z" fill="#f1f1f1" />
    <path d="M27 84l28-29 6 6z" fill="#a9adb3" />
  </Art>
);

const Acrobat = () => (
  <Art>
    <rect x="4" y="2" width="103" height="101" fill="#f5331f" />
    <rect x="8" y="6.500" width="94.500" height="91" fill="#22070a" />
    <path
      d="M24 77c6-12 30-18 48-18 16 0 18 7 10 9-12 1-28-16-33-27-4-12-2-19 2-19 6 0 5 16 1 27C47 63 35 82 28 83c-4 1-6-3-4-6z"
      fill="none"
      stroke="#fff"
      strokeWidth="3"
    />
  </Art>
);

const Xcode = () => (
  <Art>
    <defs>
      {grad("ca", [["0", "#5cc0f6"], ["1", "#1f80f0"]])}
      {grad("cb", [["0", "#f2f5f7"], ["0.5", "#b4bac0"], ["1", "#6f757b"]])}
    </defs>
    <path d="M3 28l79-12 21 71-89 13z" fill="url(#ca)" />
    <path d="M8 31l70-10 20 60-79 12z" fill="none" stroke="#b7e0fb" />
    <g transform="translate(-4 5)">{blueprint("#d7eefd")}</g>
    <text x="81" y="84" fontSize="7" fill="#e2f3fe" fontFamily="Liberation Sans, sans-serif" transform="rotate(-8 81 84)" textLength="19" lengthAdjust="spacingAndGlyphs">
      XCODE
    </text>
    <path d="M80 18l9 2-6 27-7-2z" fill="#d5dbe0" stroke="#8a9198" strokeWidth="0.800" />
    <path d="M75 45l8 1-10 52q-2 5-8 4t-6-6z" fill="#1d1d1f" />
    <path d="M59 9.500q14-7 31-1l6 4 7-3 4 2-1 12-8-1-8-7-8 4H79q-2-9-20-10.500z" fill="url(#cb)" stroke="#666" strokeWidth="0.800" />
  </Art>
);

const Vysor = () => (
  <Art>
    <rect width="110" height="110" fill="#f5752b" />
    <g fill="none" stroke="#fff" strokeWidth="6.500">
      <path d="M25 22l30 57 28-54.500H66l8 16" />
      <path d="M42 22l20 38" />
    </g>
  </Art>
);

const Skype = () => (
  <Art>
    <path
      d="M30 8q8-5 18-1 38-4 46 27 4 16 2 23 8 8 7 22-3 20-22 21-8 0-13-3-34 4-48-20-8-15-5-33-8-10-6-20Q12 10 30 8z"
      fill="#fff"
      stroke="#1678ae"
      strokeWidth="7"
    />
    <text x="56" y="81" textAnchor="middle" fontSize="74" fontWeight="800" fill="#1678ae" stroke="#1678ae" strokeWidth="2" fontFamily="Open Sans, sans-serif">
      S
    </text>
  </Art>
);

const hand = { fontFamily: "Open Sans, sans-serif", fontStyle: "italic" as const };
const Stickies = () => (
  <Art>
    <path d="M14 50l53 6 2 37-54 5z" fill="#fbf09a" />
    <path d="M36 21l68 2-1 50-72-4z" fill="#fcf0a0" />
    <path d="M2 32L54 7l16 47-54 24z" fill="#fdf4a2" />
    <g {...hand}>
      <text x="20" y="33" fontSize="10" fill="#444" transform="rotate(-20 20 33)">
        Lou
      </text>
      <text x="11" y="52" fontSize="13" fill="#444" transform="rotate(-20 11 52)">
        555-7361
      </text>
      <text x="69" y="50" fontSize="13" fill="#d8311f" fontWeight="700">
        Eggs
      </text>
      <text x="28" y="84" fontSize="11" fill="#26415c" fontWeight="700">
        MiLK
      </text>
    </g>
    <path d="M20 61l38-16M26 63l28-12" stroke="#555" strokeWidth="1.500" />
  </Art>
);

const Simulator = () => (
  <Art>
    <defs>{grad("ta", [["0", "#5cc0f6"], ["1", "#1f80f0"]])}</defs>
    <path d="M3 28l88-13 12 72-89 14z" fill="url(#ta)" />
    <path d="M8 31l79-11 10 62-79 12z" fill="none" stroke="#b7e0fb" />
    <g transform="translate(-4 5)">{blueprint("#d7eefd")}</g>
    <path d="M80 38l20 5q4 1 3 5l-11 47q-1 4-5 3l-20-5q-4-1-3-5l11-46q1-5 5-4z" fill="#101114" />
    <path d="M78 45l22 6-8 34-23-6z" fill="#303338" />
  </Art>
);

const Transfer = () => (
  <Art>
    <path d="M5 1h52q12 0 24 18v40L21 85Q5 68 5 58z" fill="#084466" />
    <path d="M18 14h50q18 6 28 24L41 97Q18 74 18 60z" fill="#fff" />
    <path d="M34 31h52q20 2 20 24v50H57Q35 102 34 78z" fill="#23c9e6" />
    <path d="M34 56h28V43l35 22-35 21V73H34z" fill="#fff" />
  </Art>
);

const Doc = () => (
  <Art>
    <path d="M22 8h28l10 6v40H20z" fill="#f4f4f4" />
    <rect x="16" y="18" width="74" height="41" fill="#f2f2f2" />
    <rect x="19" y="13" width="67" height="92" fill="#fff" stroke="#ddd" />
    <rect x="23" y="17" width="59" height="84" fill="none" stroke="#ccc" />
    <path d="M36 20.500h32v2.500H36z" fill="#ef8a5a" />
    <path d="M36 26h32v2H36z" fill="#5fb85c" />
    <rect x="30" y="21" width="3" height="6" fill="#666" />
    <rect x="71" y="21" width="5" height="4" fill="#e08a80" />
    <rect x="34" y="50" width="10" height="10" fill="#666" />
    <g stroke="#bbb" strokeWidth="1">
      <path d="M43 32h14M40 35h22M25 39h18M25 41h22M25 43h20M25 46h14" />
      <path d="M28 48h18" stroke="#666" />
    </g>
    <g stroke="#f0a09c" strokeWidth="1">
      <path d="M52 39h20M52 41h18M52 43h16M52 48h20M54 50h18M52 52h14M25 63h22M27 68h20M27 70h18M27 72h16M52 68h20M52 70h22M52 73h18M28 94h18M50 94h24" />
    </g>
    <path d="M32 78h12" stroke="#ef8a5a" strokeWidth="2" />
    <path d="M56 78h18" stroke="#5fb85c" strokeWidth="2" />
    <rect x="29" y="82" width="6" height="7" fill="#5a4a42" />
    <rect x="46" y="88" width="5" height="5" fill="#666" />
    <path d="M38 82h8M38 84h6M54 82h7M54 84h7M64 82h8M54 88h6" stroke="#bbb" />
  </Art>
);

const Trash = () => (
  <Art>
    <defs>{grad("ra", [["0", "#d5d6d9"], ["0.5", "#e0e1e3"], ["1", "#f4f4f5"]])}</defs>
    <path d="M16 17l10 78q2 8 29 8t28-8l10-78z" fill="url(#ra)" opacity=".95" />
    <ellipse cx="54.500" cy="17" rx="38.500" ry="9" fill="#c6c7cb" stroke="#eff0f1" strokeWidth="1.500" />
  </Art>
);

const DARK = "#4c5461";
const NAVY = "#04046e";
const DOCK: { art: () => React.ReactElement; dot?: string; badge?: [string, number, number] }[] = [
  { art: Finder, dot: DARK },
  {
    art: () => (
      <Art>
        <SiriArt />
      </Art>
    ),
  },
  { art: Launchpad },
  { art: Messages },
  { art: Excel },
  { art: ITunes, dot: DARK },
  { art: Outlook, dot: DARK, badge: ["212", 70.5, 48] },
  { art: AppStore, badge: ["7", 74, 42] },
  { art: Prefs, badge: ["1", 74, 42] },
  { art: Instruments, dot: "#33273a" },
  { art: Terminal, dot: NAVY },
  { art: ChromeArt, dot: NAVY },
  { art: Safari, dot: NAVY },
  { art: Acrobat, dot: NAVY },
  { art: Xcode, dot: NAVY },
  { art: Vysor, dot: NAVY },
  { art: Skype, dot: "#251743" },
  { art: Stickies, dot: "#4f4148" },
  { art: Simulator, dot: DARK },
  { art: Transfer, dot: DARK },
];

/* ---------- pieces of the menu bar and toolbar ---------- */

function StatusItems() {
  return (
    <>
      <svg width="32" height="32" viewBox="0 0 32 32">
        <path d="M0 0h20l7 7H6v19L0 20z" fill="#000" />
        <path d="M9 10h17l6 6v16H14l-5-6z" fill="#000" />
        <path d="M9 17h10v-5l9 7.500-9 7.500v-5H9z" fill="#fff" />
      </svg>
      <Shift $ml={30}>
        <svg width="29" height="35" viewBox="0 0 29 35">
          <path d="M1 1h27v21L14.500 34 1 22z" fill="#e9bd62" stroke="#a8792a" strokeWidth="2" />
          <path d="M6 3h4v22l-4-4zM13 3h3v27l-1.500 1-1.500-1zM19 3h4v18l-4 4z" fill="#fff0c0" />
        </svg>
      </Shift>
      <FanPill>
        <svg width="24" height="26" viewBox="0 0 24 26" fill="none" stroke="#dff3fb" strokeWidth="2">
          <rect x="1.500" y="9" width="21" height="15" rx="2" />
          <path d="M6 9V6h12v3M5 2h14" />
          <path d="M12 12v9M7 16.500h10" stroke="#f0a020" />
        </svg>
        <Fit ml={5} w={42} text="36°" />
      </FanPill>
      <Shift $ml={19}>
        <svg width="20" height="32" viewBox="0 0 20 32" fill="none" stroke="#3f3f41" strokeWidth="2">
          <path d="M1 8l17 15-8 8V1l8 8L1 24" />
        </svg>
      </Shift>
      <Shift $ml={29} $dy={-1}>
        <svg width="41" height="30" viewBox="0 0 41 30" fill="none" stroke="#3f3f41" strokeWidth="3">
          <path d="M1.500 10.500q19-17 38 0M8 17q12.500-11 25 0M14 23q6.500-6 13 0" />
          <circle cx="20.500" cy="27" r="2.500" fill="#3f3f41" stroke="none" />
        </svg>
      </Shift>
      <Charge ml={23} w={50} text="68%" />
      <Shift $ml={8}>
        <svg width="46" height="26" viewBox="0 0 46 26" fill="none" stroke="#3f3f41" strokeWidth="2">
          <path d="M13 2H5Q1.500 2 1.500 5v16q0 3 3.500 3h8M27 2h9q3.500 0 3.500 3v16q0 3-3.500 3h-9" />
          <path d="M23 2L12 14h7l-2 10 11-13h-7z" fill="#3f3f41" stroke="none" />
          <path d="M43 9q3 4 0 8z" fill="#3f3f41" stroke="none" />
        </svg>
      </Shift>
      <Fit ml={42} w={169} text="Wed 1:03 PM" />
      <UserName ml={35} w={202} text="Praveen Kanike" />
      <Shift $ml={32}>
        <svg width="30" height="29" viewBox="0 0 30 29" fill="none" stroke="#3f3f41" strokeWidth="2.600">
          <circle cx="11.500" cy="11.500" r="9.500" />
          <path d="M18.500 18.500l9.500 9" />
        </svg>
      </Shift>
      <Shift $ml={34}>
        <svg width="32" height="32" viewBox="9 9 92 92">
          <SiriArt />
        </svg>
      </Shift>
      <Shift $ml={24}>
        <svg width="37" height="21" viewBox="0 0 37 21" fill="#3f3f41">
          <path d="M0 0h4v3.500H0zM9 0h28v3.500H9zM0 8.500h4V12H0zM9 8.500h22V12H9zM0 17h4v3.500H0zM9 17h28v3.500H9z" />
        </svg>
      </Shift>
    </>
  );
}

function ExtensionIcons() {
  return (
    <Extensions>
      <Ext>
        <svg width="24" height="24" viewBox="0 0 24 24">
          <rect width="24" height="24" rx="4" fill="#36505c" />
          <path d="M7 5q3 0 5 7t5 7M18 5L6 19" fill="none" stroke="#fff" strokeWidth="1.800" />
        </svg>
      </Ext>
      <Ext>
        <svg width="32" height="32" viewBox="0 0 32 32">
          <path d="M16 1q12 0 13 14 0 8 3 12-4 4-14 3z" fill="#8d8d8d" />
          <ellipse cx="14" cy="16" rx="13" ry="15" fill="#c6c6c6" stroke="#888" />
          <g fill="#3f3f3f">
            <circle cx="13" cy="7" r="2.800" />
            <circle cx="6" cy="13" r="2.800" />
            <circle cx="20" cy="12" r="2.800" />
            <circle cx="8" cy="22" r="2.800" />
            <circle cx="17" cy="23" r="3" />
            <circle cx="13" cy="15" r="1.300" />
          </g>
        </svg>
      </Ext>
      <Ext>
        <svg width="32" height="32" viewBox="0 0 32 32">
          <rect width="32" height="32" rx="5" fill="#a3a3a3" />
          <circle cx="16" cy="16" r="11" fill="#c3c3c3" />
          <path d="M6 12q4-8 13-7 4 9-4 18-8-2-9-11z" fill="#fff" />
        </svg>
      </Ext>
      <Ext>
        <svg width="32" height="32" viewBox="0 0 32 32">
          <circle cx="16" cy="16" r="16" fill="#2fbd8a" />
          <path d="M22 9.500A9 9 0 1 0 23.500 20V17H17M23.500 17v6" fill="none" stroke="#fff" strokeWidth="2.400" />
        </svg>
      </Ext>
      <Ext>
        <MdCast size={35} color="#6b6b6b" />
      </Ext>
      <Ext>
        <svg width="32" height="32" viewBox="0 0 32 32">
          <path d="M10 18L24 2l7 6-13 18-7 1-3 4-6-1 7-7z" fill="#d9d9d9" stroke="#8f8f8f" />
          <path d="M9 20l8 6-6 2-5 3H1l8-7z" fill="#a9a9a9" />
        </svg>
      </Ext>
      <Ext>
        <svg width="28" height="20" viewBox="0 0 28 20">
          <path d="M9 0h19l-8 10 8 10H9l-9-10z" fill="#ff5f2a" />
          <path d="M9 0v20L0 10z" fill="#ff8347" />
          <path d="M9 0l9 10-9 10z" fill="#dd5018" />
        </svg>
      </Ext>
      <Ext>
        <svg width="30" height="32" viewBox="0 0 30 32">
          <path d="M0 0h18l6 6v14L6 24 0 18z" fill="#b3b3b3" />
          <path d="M4 5h17l5 6v8L9 27 4 20z" fill="#fff" />
          <path d="M9 10h15l6 6v15H15l-6-7z" fill="#c6c6c6" />
          <path d="M9 16h9v-4l9 7-9 7v-4H9z" fill="#fff" />
        </svg>
      </Ext>
      <Ext>
        <svg width="8" height="28" viewBox="0 0 8 28" fill="#5f5f5f">
          <circle cx="4" cy="4" r="3.300" />
          <circle cx="4" cy="14" r="3.300" />
          <circle cx="4" cy="24" r="3.300" />
        </svg>
      </Ext>
    </Extensions>
  );
}

export default function App() {
  return (
    <Screen>
      <GlobalStyle />
      <MenuBar>
        <Shift $ml={0} $dy={-3} $w={36}>
          <FaApple size={36} />
        </Shift>
        <MenuTitle $bold ml={36} w={108} text="Chrome" />
        {MENUS.map(([t, w]) => (
          <MenuTitle key={t} ml={38} w={w} text={t} />
        ))}
        <Spacer />
        <StatusItems />
      </MenuBar>

      <BackWindow $bottom={1692} $bg="linear-gradient(90deg, #999 0, #666 100px, #555 2780px, #999 100%)" />
      <BackWindow $bottom={1672} $bg="linear-gradient(90deg, #b5b5b5 0, #7f7f7f 120px, #808080 1308px, #141414 1308px, #141414 2780px, #555 100%)" />

      <Browser>
        <TabStrip>
          <Lights>
            <Light $c="#fc5b57" $b="#e0443e" />
            <Light $c="#fdbc40" $b="#dea236" />
            <Light $c="#33c748" $b="#26a934" />
          </Lights>
          {TABS.map(([icon, label], i) => (
            <Tab key={i} $z={TABS.length - i}>
              <TabShape width="135" height="57" viewBox="0 0 135 57">
                <path d="M.5 56.500L24 3q1.200-2.500 4-2.500h77q2.800 0 4 2.500l24 53.500" fill="#d0d0d0" stroke="#9a9a9a" />
              </TabShape>
              <TabIcon>
                <Favicon kind={icon} />
              </TabIcon>
              <TabLabel>{label}</TabLabel>
            </Tab>
          ))}
          <Tab $z={40} $active>
            <TabShape width="138" height="57" viewBox="0 0 138 57">
              <path d="M.5 57L24 3q1.200-2.500 4-2.500h79q2.800 0 4 2.500l25.500 54" fill="#f2f2f2" stroke="#949494" />
            </TabShape>
            <TabIcon>
              <Favicon kind="hdfc" />
            </TabIcon>
            <CloseMark width="16" height="15" viewBox="0 0 16 15" stroke="#555" strokeWidth="2.200">
              <path d="M1.500 1l13 13M14.500 1l-13 13" />
            </CloseMark>
          </Tab>
          <Shift $ml={0} $dy={-8}>
            <svg width="66" height="33" viewBox="0 0 66 33">
              <path d="M3 1h47q2.500 0 3.500 2l11.500 26q.5 2-1.500 2H16q-2.500 0-3.500-2L1 3q0-2 2-2z" fill="#cfcfcf" stroke="#9c9c9c" />
            </svg>
          </Shift>
          <Profile>
            <svg width="26" height="24" viewBox="0 0 26 24" fill="none" stroke="#d3543f" strokeWidth="2.600">
              <path d="M9 2Q1 6 2 13q1 5 6 8M1 22h7v-7M17 22q8-4 7-11-1-5-5-8M25 2h-7v7" />
              <path d="M13 4v9M13 16v3" />
            </svg>
            <Fit ml={10} w={90} text="praveen" />
          </Profile>
        </TabStrip>

        <Toolbar>
          <NavButtons width="170" height="32" viewBox="0 0 170 32" fill="none" strokeWidth="2.800">
            <path d="M49 16H25M36 4.500L24.500 16 36 27.500" stroke="#5f5f5f" />
            <path d="M79 16h24M92 4.500L103.500 16 92 27.500" stroke="#d0d0d0" />
            <path d="M159.500 21.500A12 12 0 1 1 157 8" stroke="#5f5f5f" />
            <path d="M162 3v11h-11z" fill="#5f5f5f" />
          </NavButtons>
          <Omnibox>
            <Shift $ml={13} $dy={-1}>
              <MdLock size={25} color="#0b8043" />
            </Shift>
            <Green ml={12} w={90} text="Secure" />
            <Divider />
            <Green w={66} text="https" />
            <Grey w={26} text="://" />
            <Ink w={258} text="ntrade.hdfcsec.com" />
            <Grey w={460} text="/ipoauthentication.IpoAuthenticate?" />
            <Spacer />
            <svg width="30" height="32" viewBox="0 0 30 32">
              <path d="M1.500 6q0-3 3-3h20q3 0 3 3v13M1.500 6v17q0 2.500 3 2.500H16" fill="none" stroke="#666" strokeWidth="2.600" />
              <path d="M1 4h27v6H1zM1 16h15v2.500H1z" fill="#666" />
              <rect x="16" y="16" width="14" height="14" rx="2" fill="#df5343" />
              <path d="M20 20l6 6M26 20l-6 6" stroke="#fff" strokeWidth="1.800" />
            </svg>
            <Shift $ml={23} $dy={-1}>
              <svg width="29" height="28" viewBox="0 0 29 28" fill="none" stroke="#5f5f5f" strokeWidth="2.200">
                <path d="M14.500 2.500l3.300 8 8.700.7-6.600 5.600 2 8.400-7.400-4.500-7.400 4.500 2-8.400-6.600-5.600 8.700-.7z" />
              </svg>
            </Shift>
            <Shift $ml={13} />
          </Omnibox>
          <ExtensionIcons />
        </Toolbar>

        <Bookmarks>
          <Shift $ml={27} $w={26}>
            <AppsGrid />
          </Shift>
          <Fit ml={12} w={57} text="Apps" />
          <Shift $ml={26} $w={32}>
            <svg width="32" height="32" viewBox="0 0 32 32">
              <rect width="32" height="32" fill="#252525" />
              <text x="3" y="15" fontSize="18" fontWeight="700" fill="#2b9fd9" fontFamily="DejaVu Sans, sans-serif">
                g
              </text>
              <text x="12" y="25" fontSize="18" fontWeight="700" fill="#f29a1f" fontFamily="DejaVu Sans, sans-serif">
                H
              </text>
              <path d="M9 27h19" stroke="#f29a1f" strokeWidth="2" />
            </svg>
          </Shift>
          <Fit ml={8} w={252} text="GoHired: ADOBE Apt..." />
          <Shift $ml={16} $w={32}>
            <BloggerBox>
              <FaBloggerB size={20} />
            </BloggerBox>
          </Shift>
          <Fit ml={9} w={251} text="Adobe Written Test (..." />
          <Shift $ml={18} $w={28}>
            <FbBox>
              <FaFacebookF size={24} />
            </FbBox>
          </Shift>
          <Fit ml={10} w={249} text="ADOBE Aptitude C L..." />
          <Shift $ml={19} $w={32}>
            <FaWordpress size={32} color="#1aa0d8" />
          </Shift>
          <Fit ml={8} w={250} text="Adobe Technical Wri..." />
          <Shift $ml={18} $w={32}>
            <FaGithub size={33} color="#161616" />
          </Shift>
          <Fit ml={8} w={253} text="steeve/dwmaxx2 · Gi..." />
          <Shift $ml={15} $w={32}>
            <Folder />
          </Shift>
          <Fit ml={8} w={126} text="SweatShirt" />
          <Shift $ml={27} $w={31}>
            <svg width="32" height="32" viewBox="0 0 32 32" fill="none">
              <path d="M3 32Q4 6 30 3" stroke="#555" strokeWidth="6" />
              <path d="M10 32Q12 14 31 11v12q-6 2-5 9z" fill="#d07a1e" />
              <path d="M15 32q1-9 7-12l3 12z" fill="#5a3416" />
            </svg>
          </Shift>
          <Fit ml={8} w={246} text="Understanding Digit..." />
          <Shift $ml={24} $w={28}>
            <svg width="28" height="21" viewBox="0 0 28 21">
              <rect width="28" height="21" rx="1.500" fill="#ececec" />
              <path d="M2.500 21V3L14 13 25.500 3v18" fill="none" stroke="#d8453a" strokeWidth="4.500" />
            </svg>
          </Shift>
          <Shift $ml={26} $w={32}>
            <Rex>REXABITS</Rex>
          </Shift>
          <Fit ml={8} w={251} text="Sticky Bits » Blog Ar..." />
          <Shift $ml={51} $w={12}>
            <svg width="13" height="13" viewBox="0 0 13 13" fill="none" stroke="#666" strokeWidth="2">
              <path d="M1 1l4.500 5.500L1 12M7 1l4.500 5.500L7 12" />
            </svg>
          </Shift>
          <Shift $ml={22} $w={32}>
            <Folder />
          </Shift>
          <Fit ml={8} w={202} text="Other Bookmarks" />
        </Bookmarks>

        <Page>
          <Registration>
            <Fit
              w={1339}
              text="SEBI REGN. NO.: INB230825534 (NSE CAPITAL MKT.) / INB010825538 (BSE CAPITAL MKT.) / INF231053936 / (NSE DERIVATIVES)"
            />
            <Logout>
              <Fit w={84} text="LOGOUT" />
            </Logout>
          </Registration>
          <Gap>
            <Dash />
          </Gap>
          <Banner>
            <BannerLeft>
              <Logo />
              <Nav>
                <NavItem $w={244}>
                  <Fit w={84} text="Home" />
                </NavItem>
                <NavItem $w={186} $on>
                  <Fit w={55} text="IPO" />
                </NavItem>
                <NavItem $w={530}>
                  <Fit w={230} text="IPO Order Book" />
                </NavItem>
                <NavItem $w={496}>
                  <Fit w={210} text="Funds Release" />
                </NavItem>
                <NavItem $w={224}>
                  <Fit w={74} text="Limit" />
                </NavItem>
              </Nav>
            </BannerLeft>
            <Account>
              <AccountName w={402} text="Logged in as K PRAVEEN KUMAR" />
              <Bar />
              <AccountLink w={50} text="Help" />
              <Bar />
              <AccountLink w={217} text="Terms & Conditions" />
              <Bar />
              <AccountLink w={150} text="Privacy Policy" />
            </Account>
          </Banner>
          <BlueRule />
          <Card>
            <CardTitle>
              <Fit w={477} text="Your bid has been successfully placed!" />
            </CardTitle>
            <Fit w={623} text="Your IPO application number is 2400024044112698 and" />
            <Fit w={401} text="Transaction number is 4002904508." />
            <CloseButton>
              <Fit w={57} text="Close" />
            </CloseButton>
          </Card>
          <PageFade />
        </Page>
      </Browser>

      <Dock>
        {DOCK.map(({ art: Icon, dot, badge }, i) => (
          <DockCell key={i}>
            <Icon />
            {dot && <Dot $c={dot} />}
            {badge && (
              <Badge $l={badge[1]} $w={badge[2]}>
                {badge[0]}
              </Badge>
            )}
          </DockCell>
        ))}
        <DockRule />
        <DockCell $w={110} $ml={31}>
          <Doc />
        </DockCell>
        <DockCell $w={110} $ml={9}>
          <Trash />
        </DockCell>
      </Dock>
    </Screen>
  );
}
